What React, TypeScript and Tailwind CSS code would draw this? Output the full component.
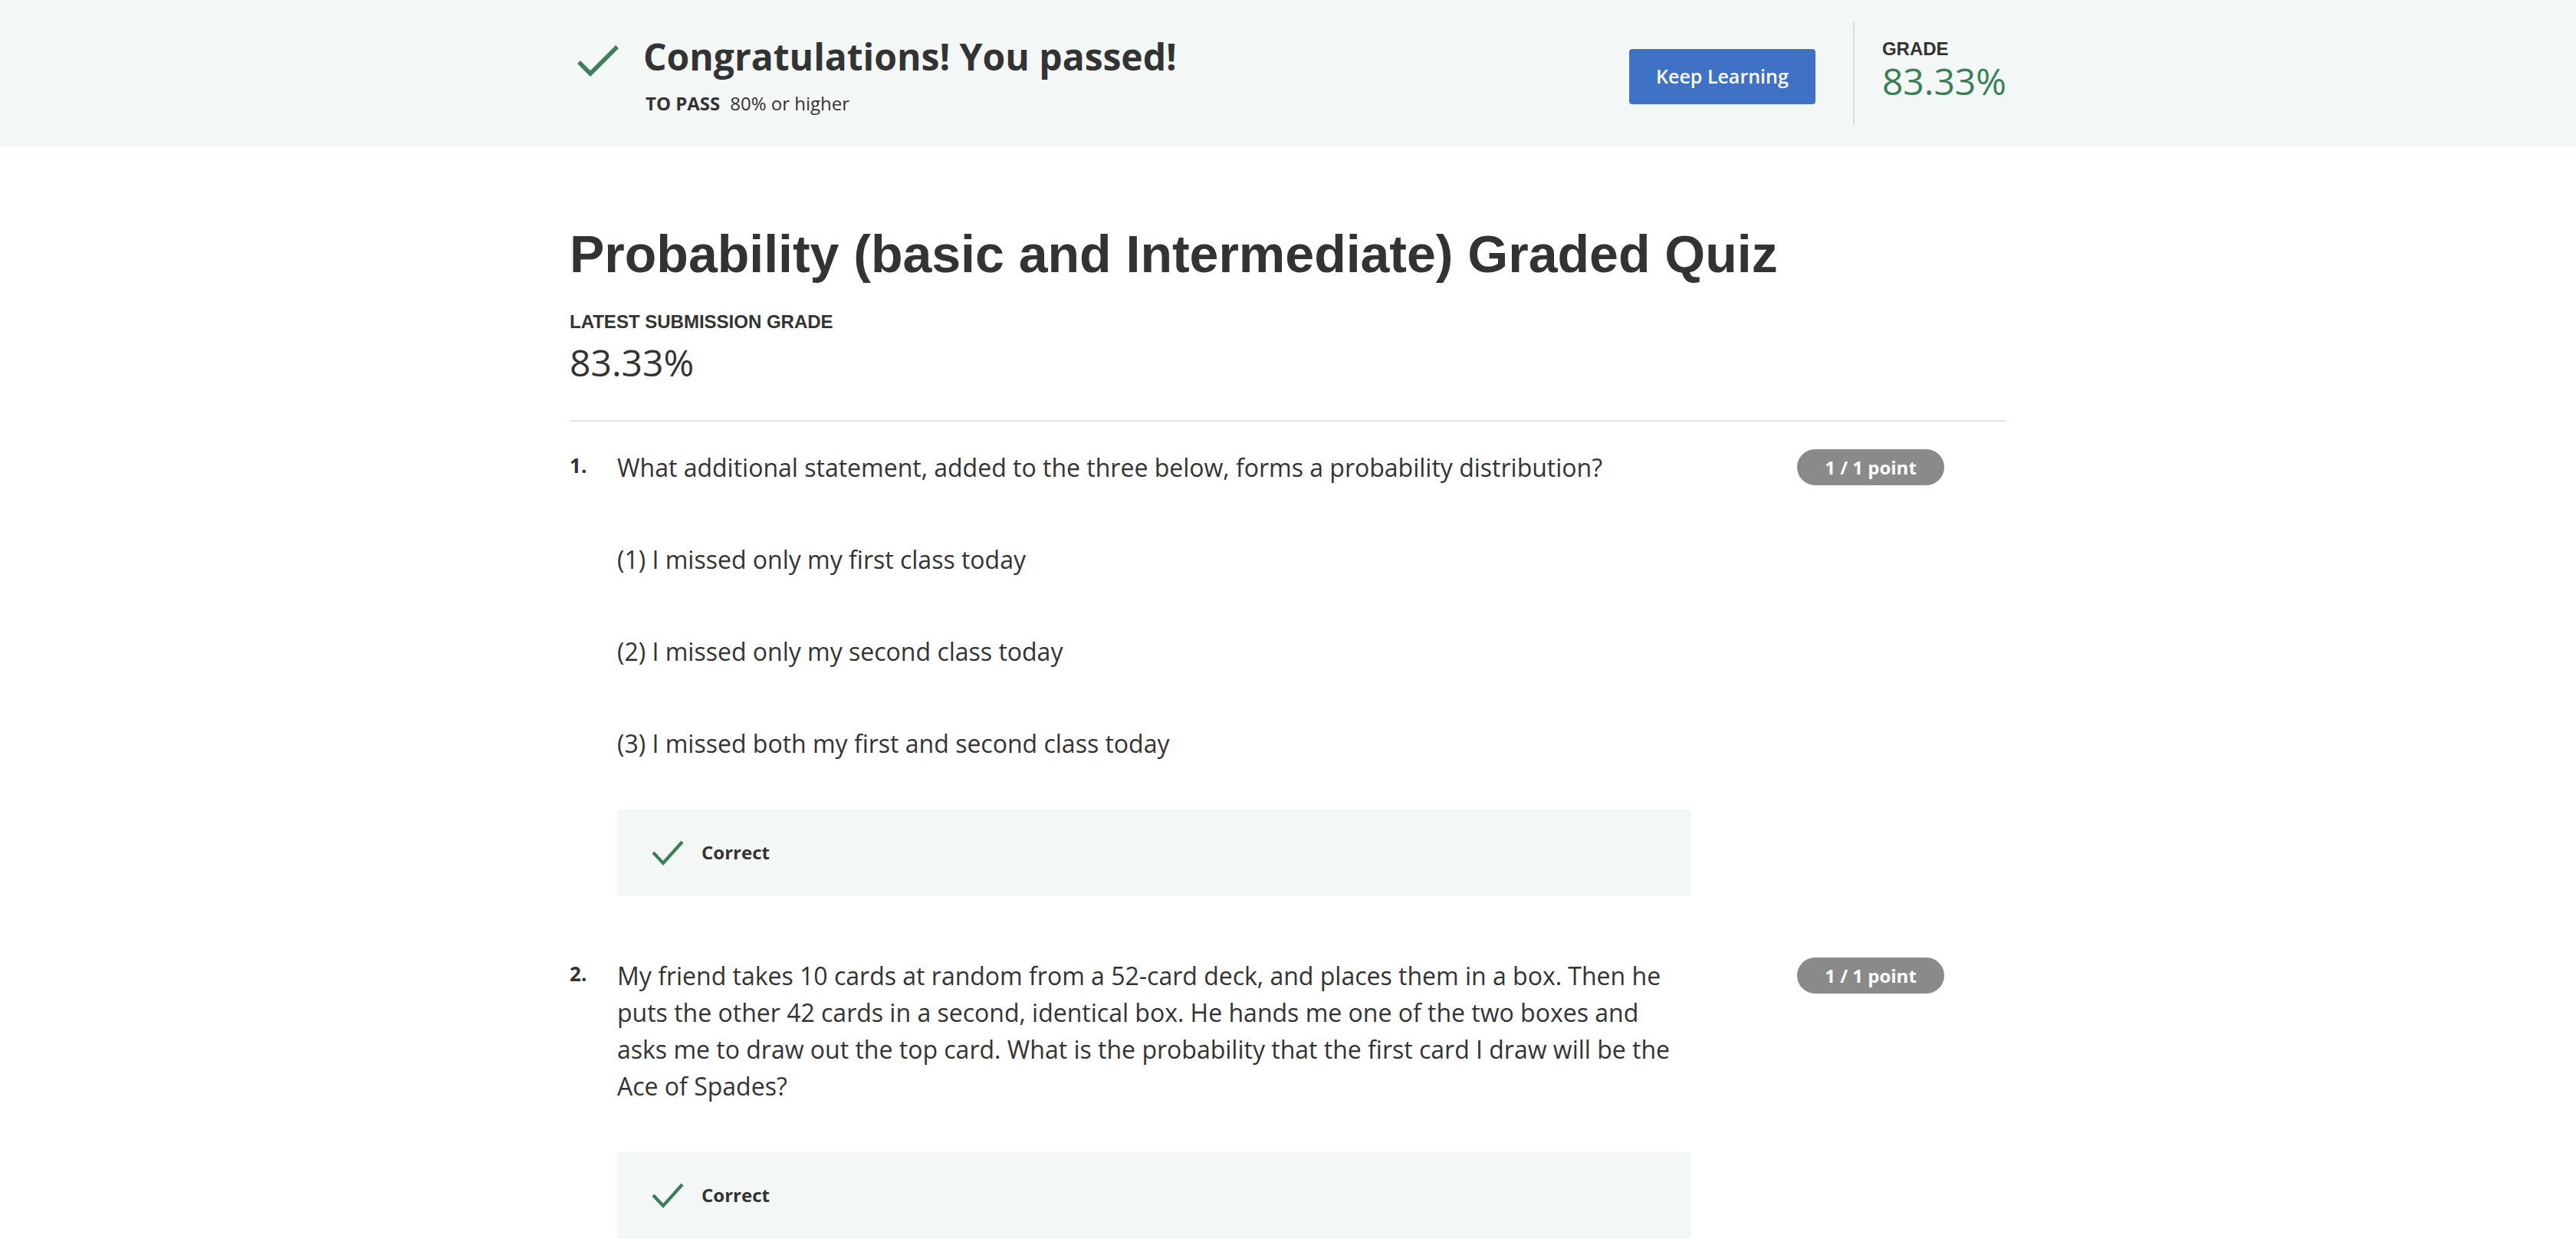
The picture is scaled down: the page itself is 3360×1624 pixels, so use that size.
import React from 'react';

type Question = {
  num: number;
  lines: string[];
  score: string;
};

const questions: Question[] = [
  {
    num: 1,
    lines: [
      'What additional statement, added to the three below, forms a probability distribution?',
      '(1) I missed only my first class today',
      '(2) I missed only my second class today',
      '(3) I missed both my first and second class today',
    ],
    score: '1 / 1 point',
  },
  {
    num: 2,
    lines: [
      'My friend takes 10 cards at random from a 52-card deck, and places them in a box. Then he puts the other 42 cards in a second, identical box. He hands me one of the two boxes and asks me to draw out the top card. What is the probability that the first card I draw will be the Ace of Spades?',
    ],
    score: '1 / 1 point',
  },
];

const CheckBig: React.FC = () => (
  <svg width="56" height="44" viewBox="0 0 56 44" className="shrink-0">
    <polyline points="3,23 18,38 53,3" fill="none" stroke="#3a7f57" strokeWidth="5.5" />
  </svg>
);

const CheckSmall: React.FC = () => (
  <svg width="44" height="36" viewBox="0 0 44 36" className="shrink-0">
    <polyline points="3,18 16,32 41,4" fill="none" stroke="#3a7f57" strokeWidth="4.2" />
  </svg>
);

const QuestionBlock: React.FC<{ q: Question }> = ({ q }) => (
  <div className="flex items-start">
    <div className="w-[62px] shrink-0 text-[26px] leading-[43px] font-bold text-[#333]">{q.num}.</div>
    <div className="w-[1400px] shrink-0">
      <div className="flex flex-col gap-[72px] text-[32px] leading-[48px] text-[#333]">
        {q.lines.map((line, i) => (
          <p key={i}>{line}</p>
        ))}
      </div>
      <div className="mt-[62px] h-[112px] bg-[#f3f8f6] flex items-center pl-[44px] gap-[22px]">
        <CheckSmall />
        <span className="text-[24px] font-bold text-[#333]">Correct</span>
      </div>
    </div>
    <div className="ml-[139px] h-[47px] w-[192px] rounded-full bg-[#8a8a8a] flex items-center justify-center text-[24px] font-bold text-white">
      {q.score}
    </div>
  </div>
);

const App: React.FC = () => {
  return (
    <div className="min-h-screen bg-white font-['Open_Sans',sans-serif] text-[#333]">
      <header className="h-[192px] bg-[#f3f8f6]">
        <div className="mx-auto w-[1874px] h-full flex items-start justify-between">
          <div className="flex items-start pt-[44px] pl-[9px] gap-[31px]">
            <div className="mt-[14px]">
              <CheckBig />
            </div>
            <div>
              <h2 className="text-[48px] leading-[60px] font-bold text-[#333]">Congratulations! You passed!</h2>
              <p className="mt-[16px] text-[24px] leading-[30px] pl-[3px]">
                <span className="font-bold">TO PASS</span>
                <span className="ml-[13px]">80% or higher</span>
              </p>
            </div>
          </div>
          <div className="flex items-start">
            <button className="mt-[64px] h-[72px] w-[243px] rounded-[4px] bg-[#3f72c5] text-white text-[25px] font-semibold">
              Keep Learning
            </button>
            <div className="mt-[28px] ml-[49px] h-[135px] w-[2px] bg-[#dddddd]" />
            <div className="mt-[50px] pl-[36px]">
              <div className="font-['Liberation_Sans',Arial,sans-serif] text-[24px] leading-[28px] font-bold text-[#333]">GRADE</div>
              <div className="text-[48px] leading-[55px] text-[#3a7f57]">83.33%</div>
            </div>
          </div>
        </div>
      </header>

      <main className="mx-auto w-[1874px] pt-[98px] pb-[80px]">
        <h1 className="font-['Liberation_Sans',Arial,sans-serif] text-[68px] leading-[82px] font-bold text-[#333]">
          Probability (basic and Intermediate) Graded Quiz
        </h1>
        <div className="mt-[35px] font-['Liberation_Sans',Arial,sans-serif] text-[24px] leading-[26px] font-bold text-[#333]">
          LATEST SUBMISSION GRADE
        </div>
        <div className="mt-[12px] text-[48px] leading-[56px] text-[#333]">83.33%</div>
        <div className="mt-[47px] h-[2px] bg-[#e1e1e1]" />
        <div className="mt-[36px] flex flex-col gap-[81px]">
          {questions.map((q) => (
            <QuestionBlock key={q.num} q={q} />
          ))}
        </div>
      </main>
    </div>
  );
};

export default App;
